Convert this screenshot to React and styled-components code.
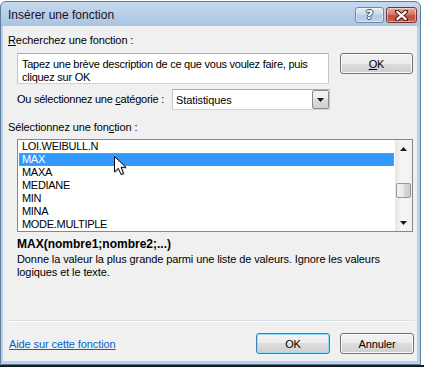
import React from "react";
import styled, { createGlobalStyle } from "styled-components";

const GlobalStyle = createGlobalStyle`
  html, body { margin: 0; padding: 0; }
  body {
    background: #fff;
    font-family: "Liberation Sans", Arial, sans-serif;
    font-size: 11px;
    letter-spacing: -0.1px;
    color: #000;
  }
`;

const Page = styled.div`
  width: 424px;
  height: 367px;
  overflow: hidden;
  padding-top: 1px;
  box-sizing: border-box;
  background: #fff;
  border-bottom: 2px solid #1a1a1a;
`;

const Window = styled.div`
  width: 421px;
  height: 364px;
  box-sizing: border-box;
  border: 1px solid #5f7b9a;
  border-radius: 6px 6px 0 0;
  background: linear-gradient(to bottom, #c6d9ee 0, #a9c4e2 24px, #b9d1ea 25px, #b9d1ea 100%);
  display: flex;
  flex-direction: column;
  padding: 0 3px 3px 2px;
`;

const TitleBar = styled.div`
  height: 24px;
  display: flex;
  align-items: center;
  padding: 2px 0 0 5px;
  box-sizing: border-box;
`;

const Title = styled.div`
  flex: 1;
  font-size: 12px;
  letter-spacing: 0;
  color: #1a1020;
`;

const CaptionBtn = styled.div`
  width: ${(p) => p.$w}px;
  height: 16px;
  box-sizing: border-box;
  border: 1px solid ${(p) => (p.$close ? "#7a3328" : "#6b88ad")};
  border-radius: 3px;
  margin-left: 2px;
  display: flex;
  align-items: center;
  justify-content: center;
  background: ${(p) =>
    p.$close
      ? "linear-gradient(to bottom, #e9a99b 0%, #d47a6b 45%, #c24e3f 55%, #c8604f 100%)"
      : "linear-gradient(to bottom, #e3edf8 0%, #c9daee 45%, #b3c9e3 55%, #bfd3ea 100%)"};
  box-shadow: inset 0 0 0 1px rgba(255, 255, 255, 0.45);
`;

const HelpGlyph = styled.span`
  font: bold 13px "DejaVu Sans", sans-serif;
  color: #fff;
  line-height: 14px;
  text-shadow: -1px 0 #3d4d60, 1px 0 #3d4d60, 0 -1px #3d4d60, 0 1px #3d4d60;
`;

const Client = styled.div`
  flex: 1;
  background: #f0f0f0;
  display: flex;
  flex-direction: column;
  padding: 7px 3px 7px 5px;
  position: relative;
`;

const Label = styled.div`
  line-height: 15px;
  margin-top: ${(p) => p.$mt || 0}px;
  white-space: nowrap;
  ${(p) => p.$tight && "letter-spacing: -0.25px; width: 149px;"}
`;

const Key = styled.span`
  text-decoration: underline;
`;

const SearchRow = styled.div`
  display: flex;
  align-items: flex-start;
  margin: 5px 0 0 9px;
  gap: 11px;
`;

const TextBox = styled.div`
  width: 312px;
  height: 31px;
  box-sizing: border-box;
  background: #fff;
  border: 1px solid;
  border-color: #abadb3 #c4c7cc #cfd2d7 #c4c7cc;
  padding: 4px 2px 4px 4px;
  line-height: 13px;
  letter-spacing: -0.25px;
`;

const Button = styled.div`
  width: ${(p) => p.$w || 74}px;
  height: 21px;
  box-sizing: border-box;
  border: 1px solid ${(p) => (p.$default ? "#3c7fb1" : "#707070")};
  border-radius: 3px;
  display: flex;
  align-items: center;
  justify-content: center;
  background: linear-gradient(to bottom, #f2f2f2 0%, #ebebeb 50%, #dddddd 50%, #cfcfcf 100%);
  box-shadow: inset 0 0 0 1px ${(p) => (p.$default ? "#8ee0fb" : "#fcfcfc")};
`;

const CategoryRow = styled.div`
  display: flex;
  align-items: center;
  margin: 5px 0 0 9px;
  gap: 6px;
`;

const Combo = styled.div`
  width: 158px;
  height: 21px;
  box-sizing: border-box;
  background: #fff;
  border: 1px solid;
  border-color: #abadb3 #c4c7cc #cfd2d7 #c4c7cc;
  display: flex;
  align-items: center;
  padding-left: 3px;
`;

const ComboText = styled.div`
  flex: 1;
`;

const DropBtn = styled.div`
  width: 17px;
  height: 19px;
  box-sizing: border-box;
  border: 1px solid #8a8a8a;
  border-radius: 2px;
  background: linear-gradient(to bottom, #f2f2f2 0%, #ebebeb 50%, #dddddd 50%, #cfcfcf 100%);
  display: flex;
  align-items: center;
  justify-content: center;
`;

const ListBox = styled.div`
  width: 396px;
  height: 93px;
  box-sizing: border-box;
  margin: 4px 0 0 9px;
  background: #fff;
  border: 1px solid #828790;
  display: flex;
`;

const Items = styled.div`
  flex: 1;
  padding-left: 1px;
  display: flex;
  flex-direction: column;
`;

const Item = styled.div`
  height: 13px;
  line-height: 13px;
  padding-left: 3px;
  letter-spacing: -0.3px;
  color: ${(p) => (p.$selected ? "#fff" : "#000")};
  background: ${(p) => (p.$selected ? "#3399ff" : "transparent")};
  outline: ${(p) => (p.$selected ? "1px dotted #c98a3a" : "none")};
  outline-offset: -1px;
  margin-right: 1px;
`;

const ScrollBar = styled.div`
  width: 17px;
  display: flex;
  flex-direction: column;
  background: linear-gradient(to right, #e6e6e6, #f6f6f6 40%, #f0f0f0);
`;

const ArrowCell = styled.div`
  height: 17px;
  display: flex;
  align-items: center;
  justify-content: center;
`;

const Track = styled.div`
  flex: 1;
  padding-top: ${(p) => p.$offset}px;
`;

const Thumb = styled.div`
  width: 15px;
  height: 15px;
  margin-left: 1px;
  box-sizing: border-box;
  border: 1px solid #979797;
  border-radius: 2px;
  background: linear-gradient(to right, #f3f3f3 0%, #e8e8e8 50%, #d8d8d8 51%, #cccccc 100%);
`;

const Syntax = styled.div`
  font-weight: bold;
  font-size: 12px;
  letter-spacing: 0;
  line-height: 15px;
  margin: 5px 0 0 9px;
`;

const Description = styled.div`
  line-height: 13px;
  margin: 1px 0 0 9px;
  width: 380px;
`;

const Spacer = styled.div`
  flex: 1;
`;

const Separator = styled.div`
  height: 1px;
  background: #d5dfe5;
  margin-left: 1px;
  border-bottom: 1px solid #fff;
`;

const Footer = styled.div`
  display: flex;
  align-items: center;
  margin: 11px 0 0 1px;
  gap: 10px;
`;

const Link = styled.a`
  flex: 1;
  color: #0066cc;
  text-decoration: underline;
  cursor: pointer;
`;

const Cursor = styled.svg`
  position: absolute;
  left: 110px;
  top: 129px;
  pointer-events: none;
`;

const functions = ["LOI.WEIBULL.N", "MAX", "MAXA", "MEDIANE", "MIN", "MINA", "MODE.MULTIPLE"];

const Triangle = ({ up }) => (
  <svg width="7" height="4" viewBox="0 0 7 4">
    <path d={up ? "M0 4 L3.5 0 L7 4 Z" : "M0 0 L7 0 L3.5 4 Z"} fill="#1a1a1a" />
  </svg>
);

const App = () => {
  return (
    <>
      <GlobalStyle />
      <Page>
        <Window>
          <TitleBar>
            <Title>Insérer une fonction</Title>
            <CaptionBtn $w={29}>
              <HelpGlyph>?</HelpGlyph>
            </CaptionBtn>
            <CaptionBtn $w={31} $close>
              <svg width="13" height="11" viewBox="0 0 13 11">
                <path d="M2 1.5 L11 9.5 M11 1.5 L2 9.5" stroke="#4a1a14" strokeWidth="4.2" strokeLinecap="round" />
                <path d="M2.3 1.8 L10.7 9.2 M10.7 1.8 L2.3 9.2" stroke="#fff" strokeWidth="2.2" strokeLinecap="round" />
              </svg>
            </CaptionBtn>
          </TitleBar>

          <Client>
            <Label>
              <Key>R</Key>echerchez une fonction :
            </Label>
            <SearchRow>
              <TextBox>
                Tapez une brève description de ce que vous voulez faire, puis cliquez sur OK
              </TextBox>
              <Button $w={73}>
                <Key>O</Key>K
              </Button>
            </SearchRow>
            <CategoryRow>
              <Label $tight>
                Ou sélectionnez une <Key>c</Key>atégorie :
              </Label>
              <Combo>
                <ComboText>Statistiques</ComboText>
                <DropBtn>
                  <Triangle />
                </DropBtn>
              </Combo>
            </CategoryRow>
            <Label $mt={10}>
              Sélectionnez une fon<Key>c</Key>tion :
            </Label>
            <ListBox>
              <Items>
                {functions.map((f) => (
                  <Item key={f} $selected={f === "MAX"}>
                    {f}
                  </Item>
                ))}
              </Items>
              <ScrollBar>
                <ArrowCell>
                  <Triangle up />
                </ArrowCell>
                <Track $offset={26}>
                  <Thumb />
                </Track>
                <ArrowCell>
                  <Triangle />
                </ArrowCell>
              </ScrollBar>
            </ListBox>
            <Syntax>MAX(nombre1;nombre2;...)</Syntax>
            <Description>
              Donne la valeur la plus grande parmi une liste de valeurs. Ignore les valeurs logiques et le texte.
            </Description>
            <Spacer />
            <Separator />
            <Footer>
              <Link>Aide sur cette fonction</Link>
              <Button $default>OK</Button>
              <Button>Annuler</Button>
            </Footer>
            <Cursor width="16" height="22" viewBox="0 0 16 22">
              <path d="M2.5 2.5 L2.5 18.5 L6.5 14.5 L9.3 20.8 L12 19.6 L9.3 13.5 L14.5 13.5 Z" fill="rgba(0,0,0,0.25)" />
              <path d="M1.5 1.5 L1.5 17 L5.3 13.3 L8 19.5 L10.5 18.4 L8 12.3 L13 12.3 Z" fill="#fff" stroke="#000" strokeWidth="1" strokeLinejoin="miter" />
            </Cursor>
          </Client>
        </Window>
      </Page>
    </>
  );
};

export default App;
